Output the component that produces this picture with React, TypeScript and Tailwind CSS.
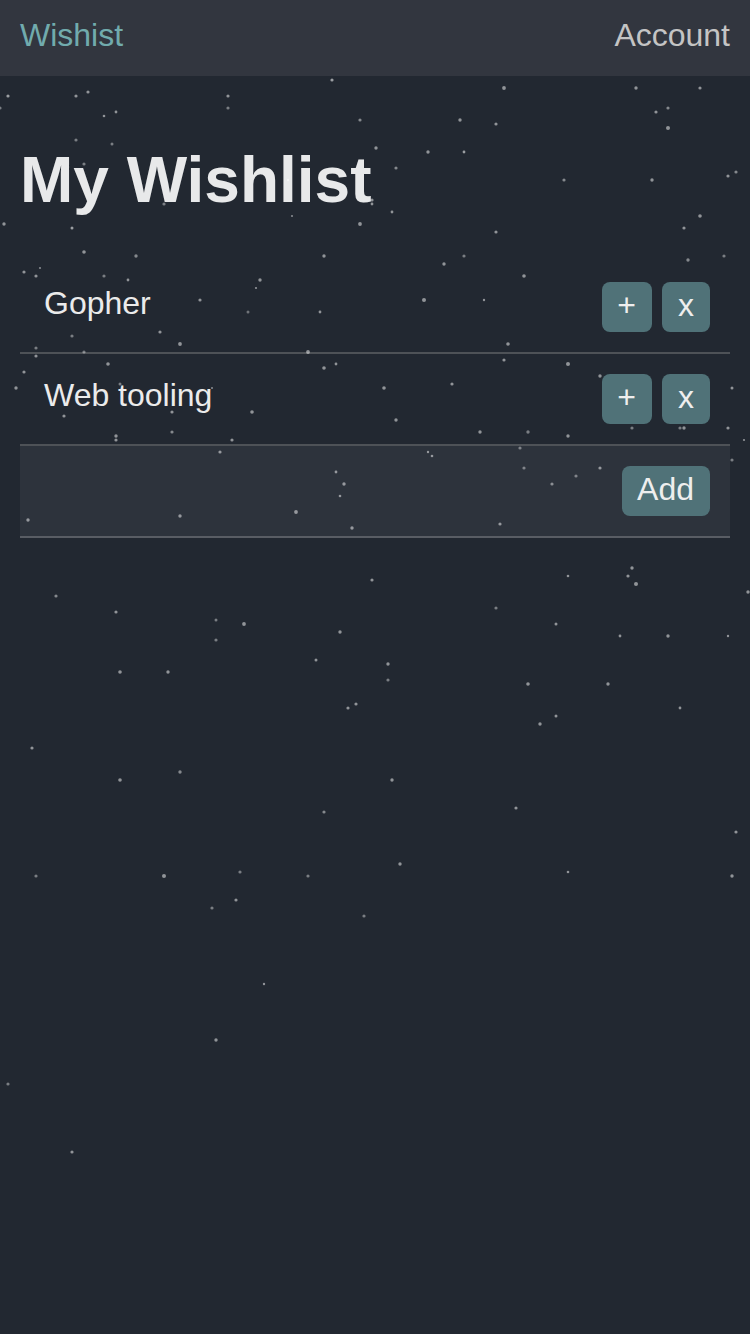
const items = ['Gopher', 'Web tooling'];

// Each star is [x, y, radius, opacity].
const stars: [number, number, number, number][] = [
  [332, 80, 1.6, 0.55], [8, 96, 1.6, 0.55], [76, 96, 1.6, 0.5], [88, 92, 1.6, 0.5], [0, 108, 1.6, 0.4], [228, 96, 1.6, 0.5], [228, 108, 1.6, 0.4],
  [104, 116, 1.3, 0.5], [116, 112, 1.4, 0.5], [76, 140, 1.6, 0.4], [112, 144, 1.5, 0.4], [84, 164, 1.6, 0.4], [164, 204, 1.6, 0.4], [4, 224, 1.7, 0.5], [72, 228, 1.5, 0.55],
  [360, 120, 1.6, 0.45], [460, 120, 1.7, 0.5], [496, 124, 1.6, 0.5], [376, 148, 1.7, 0.5], [428, 152, 1.7, 0.5], [464, 152, 1.4, 0.55], [396, 168, 1.6, 0.45],
  [288, 180, 1.2, 0.5], [372, 200, 1.6, 0.5], [372, 204, 1.4, 0.5], [392, 212, 1.4, 0.5], [292, 216, 1.1, 0.45], [360, 224, 1.9, 0.5], [496, 232, 1.6, 0.5],
  [504, 88, 1.9, 0.5], [636, 88, 1.7, 0.5], [700, 88, 1.6, 0.5], [656, 112, 1.6, 0.5], [668, 108, 1.6, 0.45], [668, 128, 2, 0.5], [564, 180, 1.6, 0.45], [652, 180, 1.7, 0.5],
  [728, 176, 1.6, 0.5], [736, 172, 1.6, 0.45], [700, 216, 1.8, 0.5], [684, 228, 1.6, 0.5], [84, 252, 1.8, 0.5], [136, 256, 1.7, 0.45], [24, 272, 1.6, 0.5], [40, 268, 1.1, 0.45],
  [36, 276, 1.6, 0.5], [104, 276, 1.6, 0.4], [128, 280, 1.4, 0.5], [200, 300, 1.6, 0.5], [248, 312, 1.5, 0.35], [160, 332, 1.6, 0.5], [180, 344, 1.9, 0.5], [72, 336, 1.6, 0.4],
  [36, 348, 1.6, 0.4], [36, 356, 1.6, 0.5], [84, 352, 1.6, 0.4], [108, 364, 1.8, 0.5], [24, 372, 1.6, 0.5], [16, 388, 1.7, 0.5], [120, 384, 1.5, 0.4], [212, 388, 1.1, 0.45],
  [64, 416, 1.6, 0.5], [172, 412, 1.6, 0.5], [172, 432, 1.6, 0.45], [116, 436, 1.7, 0.5], [116, 440, 1.6, 0.5], [232, 440, 1.6, 0.5], [220, 452, 1.6, 0.5], [28, 520, 1.7, 0.5], [180, 516, 1.7, 0.5],
  [324, 256, 1.7, 0.5], [464, 256, 1.6, 0.4], [444, 264, 1.7, 0.5], [260, 280, 1.7, 0.5], [256, 288, 1.1, 0.5], [424, 300, 2, 0.5], [484, 300, 1.2, 0.5], [320, 312, 1.4, 0.5],
  [308, 352, 1.9, 0.5], [336, 364, 1.4, 0.5], [324, 368, 1.8, 0.5], [384, 388, 1.8, 0.5], [452, 384, 1.6, 0.5], [252, 412, 1.8, 0.5], [396, 420, 1.7, 0.5], [480, 432, 1.7, 0.5],
  [428, 452, 1.2, 0.5], [432, 456, 1.3, 0.5], [336, 472, 1.4, 0.5], [344, 484, 1.7, 0.5], [340, 496, 1.3, 0.5], [296, 512, 1.9, 0.5], [352, 528, 1.7, 0.5], [500, 524, 1.6, 0.5],
  [688, 260, 1.7, 0.45], [724, 256, 1.6, 0.4], [524, 276, 1.8, 0.5], [508, 344, 1.8, 0.5], [504, 360, 1.6, 0.5], [568, 364, 2, 0.5], [600, 376, 1.7, 0.5], [732, 388, 1.5, 0.5],
  [632, 428, 1.6, 0.4], [680, 428, 1.6, 0.4], [684, 428, 1.7, 0.5], [728, 428, 1.6, 0.5], [528, 432, 1.7, 0.4], [568, 436, 1.7, 0.5], [744, 440, 1.1, 0.5], [520, 448, 1.6, 0.4],
  [732, 460, 1.6, 0.4], [524, 468, 1.6, 0.4], [600, 468, 1.6, 0.5], [576, 476, 1.6, 0.4], [552, 484, 1.6, 0.45], [372, 580, 1.6, 0.5], [56, 596, 1.6, 0.45], [116, 612, 1.6, 0.5],
  [216, 620, 1.5, 0.4], [244, 624, 1.9, 0.5], [216, 640, 1.6, 0.4], [340, 632, 1.7, 0.5], [316, 660, 1.5, 0.5], [120, 672, 1.8, 0.5], [168, 672, 1.7, 0.5], [356, 704, 1.6, 0.5],
  [348, 708, 1.6, 0.5], [32, 748, 1.6, 0.5], [180, 772, 1.7, 0.45], [120, 780, 1.8, 0.5], [324, 812, 1.6, 0.45], [36, 876, 1.6, 0.4], [164, 876, 2, 0.5], [240, 872, 1.6, 0.4],
  [308, 876, 1.6, 0.4], [236, 900, 1.6, 0.5], [212, 908, 1.6, 0.4], [364, 916, 1.6, 0.4], [632, 568, 1.7, 0.5], [568, 576, 1.3, 0.5], [628, 576, 1.6, 0.5], [636, 584, 2, 0.5],
  [748, 592, 1.7, 0.5], [496, 608, 1.6, 0.4], [556, 624, 1.5, 0.5], [620, 636, 1.4, 0.5], [668, 636, 1.7, 0.5], [728, 636, 1.2, 0.5], [388, 664, 1.7, 0.5], [388, 680, 1.6, 0.4],
  [528, 684, 1.8, 0.5], [608, 684, 1.7, 0.5], [680, 708, 1.4, 0.5], [556, 716, 1.5, 0.5], [540, 724, 1.7, 0.5], [392, 780, 1.7, 0.5], [516, 808, 1.6, 0.5], [736, 832, 1.6, 0.5],
  [400, 864, 1.7, 0.5], [568, 872, 1.3, 0.5], [732, 876, 1.7, 0.5], [264, 984, 1.2, 0.5], [216, 1040, 1.7, 0.5], [8, 1084, 1.6, 0.4], [72, 1152, 1.6, 0.5],
];

function Starfield() {
  return (
    <svg className="pointer-events-none absolute inset-0" width="750" height="1334" viewBox="0 0 750 1334" aria-hidden="true">
      {stars.map(([x, y, r, o], i) => (
        <circle key={i} cx={x} cy={y} r={r} fill="#fff" fillOpacity={o} />
      ))}
    </svg>
  );
}

function Button({ label, className }: { label: string; className: string }) {
  return (
    <button className={`flex h-[50px] justify-center rounded-lg bg-[#507278] leading-[47px] text-[#eeeeee] ${className}`}>
      {label}
    </button>
  );
}

export default function App() {
  return (
    <div className="relative h-[1334px] w-[750px] overflow-hidden bg-[#222831] font-['Liberation_Sans',Arial,sans-serif] text-[32px] leading-9 text-[#ebebeb]">
      <nav className="flex h-[76px] justify-between bg-[#32363f] px-5 pt-[17px]">
        <a className="text-[#71abad]">Wishist</a>
        <a className="text-[#c4c4c4]">Account</a>
      </nav>
      <main className="px-5">
        <h1 className="pt-[68px] text-[64px] leading-[72px] font-bold text-[#e8e9ea]">My Wishlist</h1>
        <ul className="mt-[46px]">
          {items.map((item) => (
            <li key={item} className="flex h-[92px] justify-between border-b-2 border-[#4e5257] pt-5 pr-5 pl-6">
              <span className="pt-[3px]">{item}</span>
              <div className="flex gap-2.5">
                <Button label="+" className="w-[50px] pr-px" />
                <Button label="x" className="w-12" />
              </div>
            </li>
          ))}
          <li className="flex h-[92px] justify-end border-b-2 border-[#595d64] bg-[#2d333c] pt-5 pr-5">
            <Button label="Add" className="w-[88px] pr-px" />
          </li>
        </ul>
      </main>
      <Starfield />
    </div>
  );
}
